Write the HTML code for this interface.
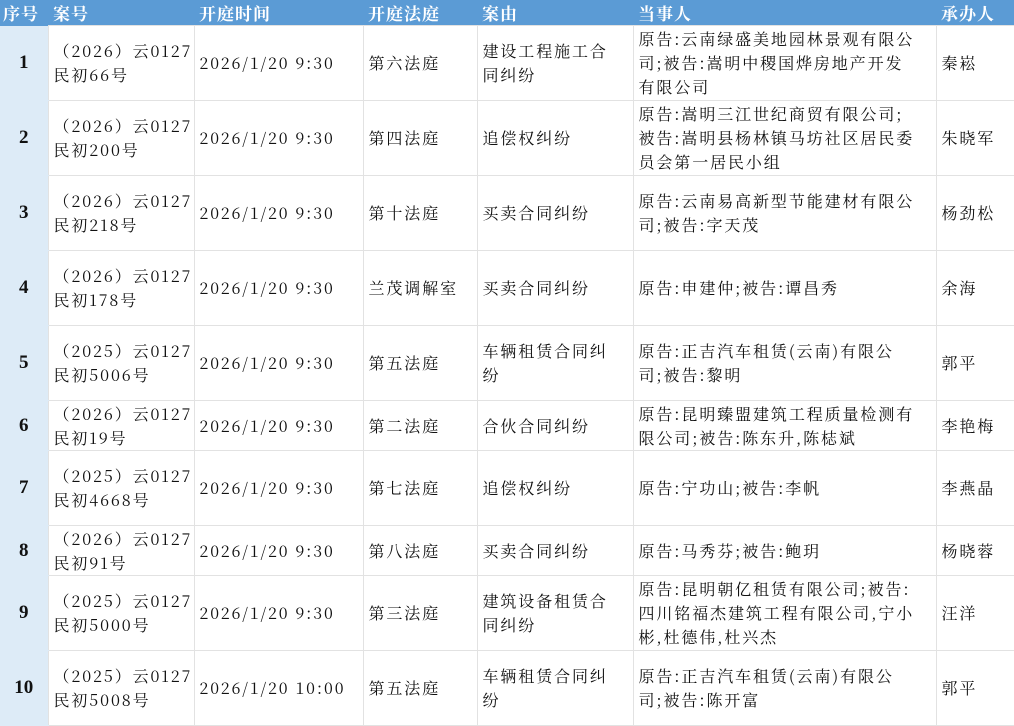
<!DOCTYPE html>
<html><head><meta charset="utf-8"><style>
html,body{margin:0;padding:0;background:#fff;width:1014px;height:726px;overflow:hidden}
table{border-collapse:collapse;table-layout:fixed;width:1014px;font-family:"Noto Serif CJK SC","Liberation Serif",serif;font-size:16px;color:#111;letter-spacing:1.9px}
td,th{padding:0 0 0 5px;white-space:nowrap;vertical-align:middle;line-height:24px;overflow:hidden}
th{background:#5b9bd5;color:#fff;text-align:left;height:25px;font-weight:bold;font-size:17px;border:none;line-height:25px;letter-spacing:1px}
td{border:1px solid #e2e2e2}
td.n{background:#ddebf7;border:none;border-bottom:1px solid #ddebf7;text-align:center;font-weight:bold;padding:0;letter-spacing:0;font-family:"Liberation Serif",serif;font-size:19px}
tr.h75 td{height:74px}
tr.h50 td{height:49px}
</style></head><body>
<table>
<colgroup><col style="width:48px"><col style="width:146px"><col style="width:169px"><col style="width:114px"><col style="width:156px"><col style="width:303px"><col style="width:78px"></colgroup>
<tr><th style="padding-left:3px">序号</th><th>案号</th><th>开庭时间</th><th>开庭法庭</th><th>案由</th><th>当事人</th><th>承办人</th></tr>
<tr class="h75"><td class="n">1</td><td>（2026）云0127<br>民初66号</td><td>2026/1/20 9:30</td><td>第六法庭</td><td>建设工程施工合<br>同纠纷</td><td>原告:云南绿盛美地园林景观有限公<br>司;被告:嵩明中稷国烨房地产开发<br>有限公司</td><td>秦崧</td></tr>
<tr class="h75"><td class="n">2</td><td>（2026）云0127<br>民初200号</td><td>2026/1/20 9:30</td><td>第四法庭</td><td>追偿权纠纷</td><td>原告:嵩明三江世纪商贸有限公司;<br>被告:嵩明县杨林镇马坊社区居民委<br>员会第一居民小组</td><td>朱晓军</td></tr>
<tr class="h75"><td class="n">3</td><td>（2026）云0127<br>民初218号</td><td>2026/1/20 9:30</td><td>第十法庭</td><td>买卖合同纠纷</td><td>原告:云南易高新型节能建材有限公<br>司;被告:字天茂</td><td>杨劲松</td></tr>
<tr class="h75"><td class="n">4</td><td>（2026）云0127<br>民初178号</td><td>2026/1/20 9:30</td><td>兰茂调解室</td><td>买卖合同纠纷</td><td>原告:申建仲;被告:谭昌秀</td><td>余海</td></tr>
<tr class="h75"><td class="n">5</td><td>（2025）云0127<br>民初5006号</td><td>2026/1/20 9:30</td><td>第五法庭</td><td>车辆租赁合同纠<br>纷</td><td>原告:正吉汽车租赁(云南)有限公<br>司;被告:黎明</td><td>郭平</td></tr>
<tr class="h50"><td class="n">6</td><td>（2026）云0127<br>民初19号</td><td>2026/1/20 9:30</td><td>第二法庭</td><td>合伙合同纠纷</td><td>原告:昆明臻盟建筑工程质量检测有<br>限公司;被告:陈东升,陈梽斌</td><td>李艳梅</td></tr>
<tr class="h75"><td class="n">7</td><td>（2025）云0127<br>民初4668号</td><td>2026/1/20 9:30</td><td>第七法庭</td><td>追偿权纠纷</td><td>原告:宁功山;被告:李帆</td><td>李燕晶</td></tr>
<tr class="h50"><td class="n">8</td><td>（2026）云0127<br>民初91号</td><td>2026/1/20 9:30</td><td>第八法庭</td><td>买卖合同纠纷</td><td>原告:马秀芬;被告:鲍玥</td><td>杨晓蓉</td></tr>
<tr class="h75"><td class="n">9</td><td>（2025）云0127<br>民初5000号</td><td>2026/1/20 9:30</td><td>第三法庭</td><td>建筑设备租赁合<br>同纠纷</td><td>原告:昆明朝亿租赁有限公司;被告:<br>四川铭福杰建筑工程有限公司,宁小<br>彬,杜德伟,杜兴杰</td><td>汪洋</td></tr>
<tr class="h75"><td class="n">10</td><td>（2025）云0127<br>民初5008号</td><td>2026/1/20 10:00</td><td>第五法庭</td><td>车辆租赁合同纠<br>纷</td><td>原告:正吉汽车租赁(云南)有限公<br>司;被告:陈开富</td><td>郭平</td></tr>
</table>
</body></html>
